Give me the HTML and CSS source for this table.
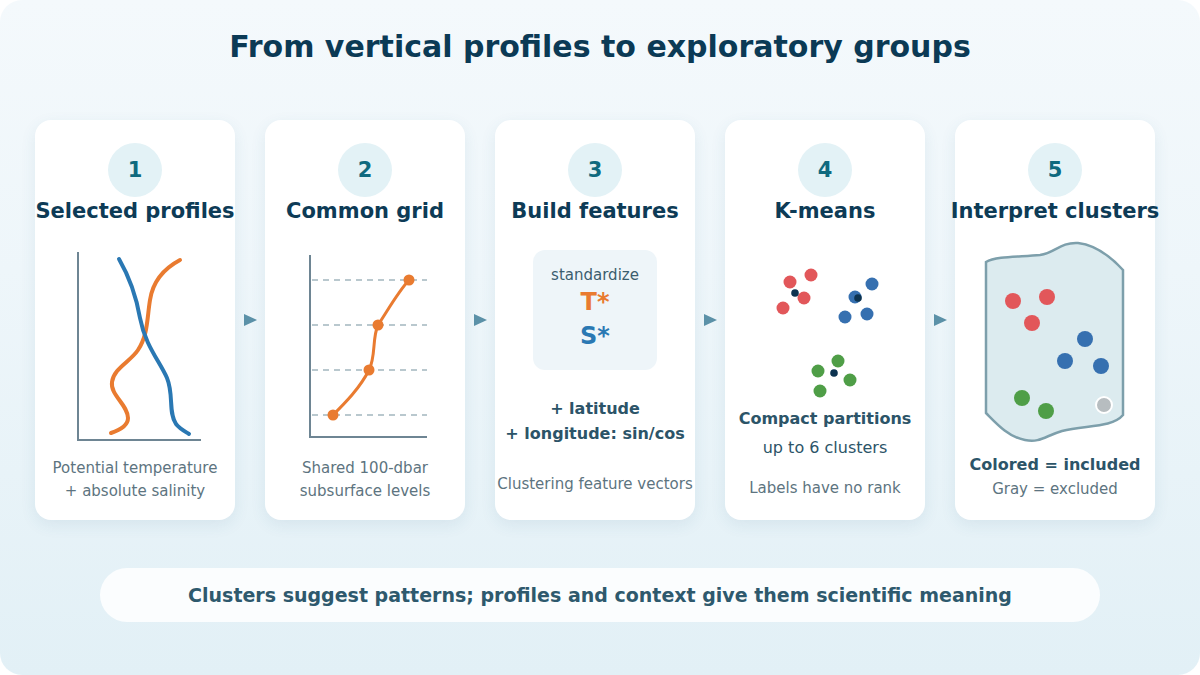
FILE: index.html
```html
<!DOCTYPE html>
<html>
<head>
<meta charset="utf-8">
<link rel="stylesheet" href="styles.css">
</head>
<body>
<div class="frame">
  <h1 class="title">From vertical profiles to exploratory groups</h1>
  <div class="row">
    <div class="card">
      <div class="badge">1</div>
      <div class="card-title">Selected profiles</div>
      <svg class="fig fig-tall" viewBox="35 223 200 222" width="200" height="222">
        <path d="M78 252 V440 H201" class="axis"/>
        <path d="M180 260 C165 268 153 280 150 300 C147 318 148 335 138 350 C130 362 114 368 112 382 C110 395 128 405 128 418 C128 427 117 431 111 433" class="curve orange"/>
        <path d="M119 259 C130 278 136 295 140 318 C145 345 160 362 167 378 C174 395 168 412 176 424 C180 429 186 432 189 434" class="curve blue"/>
      </svg>
      <div class="caption cap-a">Potential temperature<br>+ absolute salinity</div>
    </div>
    <div class="arrow"><span class="tri"></span></div>
    <div class="card">
      <div class="badge">2</div>
      <div class="card-title">Common grid</div>
      <svg class="fig fig-tall" viewBox="265 223 200 222" width="200" height="222">
        <path d="M312 280 H427 M312 325 H427 M312 370 H427 M312 415 H427" class="dash"/>
        <path d="M310 255 V437 H427" class="axis"/>
        <path d="M333 415 C345 403 360 388 369 370 C376 357 372 338 378 325 C388 310 398 292 409 280" class="line orange"/>
        <circle cx="409" cy="280" r="5.5" class="o-fill"/>
        <circle cx="378" cy="325" r="5.5" class="o-fill"/>
        <circle cx="369" cy="370" r="5.5" class="o-fill"/>
        <circle cx="333" cy="415" r="5.5" class="o-fill"/>
      </svg>
      <div class="caption cap-a">Shared 100-dbar<br>subsurface levels</div>
    </div>
    <div class="arrow"><span class="tri"></span></div>
    <div class="card">
      <div class="badge">3</div>
      <div class="card-title">Build features</div>
      <div class="std-box">
        <div class="std-label">standardize</div>
        <div class="std-var t">T*</div>
        <div class="std-var s">S*</div>
      </div>
      <div class="strong-lines">+ latitude<br>+ longitude: sin/cos</div>
      <div class="caption cap-c">Clustering feature vectors</div>
    </div>
    <div class="arrow"><span class="tri"></span></div>
    <div class="card">
      <div class="badge">4</div>
      <div class="card-title">K-means</div>
      <svg class="fig" viewBox="725 223 200 177" width="200" height="177">
        <circle cx="790" cy="282" r="6.5" class="red"/>
        <circle cx="811" cy="275" r="6.5" class="red"/>
        <circle cx="804" cy="298" r="6.5" class="red"/>
        <circle cx="783" cy="308" r="6.5" class="red"/>
        <circle cx="795" cy="293" r="3.8" class="dark"/>
        <circle cx="872" cy="284" r="6.5" class="bl"/>
        <circle cx="855" cy="297" r="6.5" class="bl"/>
        <circle cx="867" cy="314" r="6.5" class="bl"/>
        <circle cx="845" cy="317" r="6.5" class="bl"/>
        <circle cx="858" cy="298" r="3.8" class="dark"/>
        <circle cx="838" cy="361" r="6.5" class="gr"/>
        <circle cx="818" cy="371" r="6.5" class="gr"/>
        <circle cx="850" cy="380" r="6.5" class="gr"/>
        <circle cx="820" cy="391" r="6.5" class="gr"/>
        <circle cx="834" cy="373" r="3.8" class="dark"/>
      </svg>
      <div class="strong-one">Compact partitions</div>
      <div class="mid-line">up to 6 clusters</div>
      <div class="caption cap-d">Labels have no rank</div>
    </div>
    <div class="arrow"><span class="tri"></span></div>
    <div class="card">
      <div class="badge">5</div>
      <div class="card-title">Interpret clusters</div>
      <svg class="fig fig-tall" viewBox="955 223 200 222" width="200" height="222">
        <path d="M986 262 C996 256 1020 257 1040 255 C1055 253 1060 242 1078 243 C1096 245 1112 258 1123 270 L1123 415 C1112 428 1085 425 1062 431 C1045 436 1040 443 1025 440 C1008 437 995 422 986 413 Z" class="blob"/>
        <circle cx="1013" cy="301" r="8" class="red"/>
        <circle cx="1047" cy="297" r="8" class="red"/>
        <circle cx="1032" cy="323" r="8" class="red"/>
        <circle cx="1085" cy="339" r="8" class="bl"/>
        <circle cx="1065" cy="361" r="8" class="bl"/>
        <circle cx="1101" cy="366" r="8" class="bl"/>
        <circle cx="1022" cy="398" r="8" class="gr"/>
        <circle cx="1046" cy="411" r="8" class="gr"/>
        <circle cx="1104" cy="405" r="8" class="gray"/>
      </svg>
      <div class="strong-e">Colored = included</div>
      <div class="caption cap-e">Gray = excluded</div>
    </div>
  </div>
  <div class="pill">Clusters suggest patterns; profiles and context give them scientific meaning</div>
</div>
</body>
</html>
```

FILE: styles.css
```css
* { box-sizing: border-box; }
html, body { margin: 0; padding: 0; background: #ffffff; }
body { font-family: "DejaVu Sans", "Liberation Sans", sans-serif; }

.frame {
  width: 1200px;
  height: 675px;
  border-radius: 22px;
  background: linear-gradient(180deg, #f4f9fc 0%, #eef6fa 40%, #e2f0f6 100%);
  overflow: hidden;
  display: flex;
  flex-direction: column;
}

.title {
  margin: 0;
  padding-top: 30px;
  font-size: 30px;
  line-height: 34px;
  font-weight: bold;
  color: #0b3a55;
  text-align: center;
}

.row {
  display: flex;
  align-items: center;
  padding-left: 35px;
  margin-top: 56px;
}

.card {
  width: 200px;
  height: 400px;
  flex: none;
  background: #ffffff;
  border-radius: 16px;
  box-shadow: 0 5px 16px rgba(40, 95, 130, 0.09);
  display: flex;
  flex-direction: column;
  align-items: center;
  padding-top: 23px;
}

.arrow {
  width: 30px;
  flex: none;
  display: flex;
  justify-content: center;
  align-items: center;
}
.tri {
  width: 0;
  height: 0;
  border-top: 6px solid transparent;
  border-bottom: 6px solid transparent;
  border-left: 13px solid #5b91a8;
}

.badge {
  width: 54px;
  height: 54px;
  border-radius: 50%;
  background: #e3f2f6;
  color: #0f6a7f;
  font-weight: bold;
  font-size: 21px;
  display: flex;
  align-items: center;
  justify-content: center;
}

.card-title {
  margin-top: 2px;
  font-size: 21px;
  line-height: 24px;
  font-weight: bold;
  color: #0d3b56;
  white-space: nowrap;
  text-align: center;
}

.fig { display: block; flex: none; }

.axis { fill: none; stroke: #6e8593; stroke-width: 2; }
.dash { fill: none; stroke: #a3b6be; stroke-width: 1.4; stroke-dasharray: 6 5; }
.curve { fill: none; stroke-width: 4; stroke-linecap: round; }
.line { fill: none; stroke-width: 3; stroke-linecap: round; }
.curve.orange, .line.orange { stroke: #e97b30; }
.curve.blue { stroke: #2a78b3; }
.o-fill { fill: #e97b30; }

.red { fill: #e2575a; }
.bl { fill: #3670b0; }
.gr { fill: #4f9e47; }
.dark { fill: #0d3350; }
.gray { fill: #b7bdc0; stroke: #ffffff; stroke-width: 2; }
.blob { fill: #dcebef; stroke: #7d9fab; stroke-width: 2.5; }

.caption {
  font-size: 15px;
  line-height: 23px;
  color: #5d7480;
  text-align: center;
  white-space: nowrap;
}
.cap-a { margin-top: 11.5px; }

.std-box {
  margin-top: 27px;
  width: 124px;
  height: 120px;
  border-radius: 12px;
  background: #eef5f9;
  padding-top: 15px;
  text-align: center;
}
.std-label {
  font-size: 15px;
  line-height: 20px;
  color: #3b5d6e;
}
.std-var {
  font-size: 24px;
  line-height: 34px;
  font-weight: bold;
}
.std-var.t { color: #e97b30; }
.std-var.s { color: #2a78b3; }

.strong-lines {
  margin-top: 25.5px;
  font-size: 16px;
  line-height: 25px;
  font-weight: bold;
  color: #2c5468;
  text-align: center;
  white-space: nowrap;
}
.cap-c { margin-top: 27px; }

.strong-one {
  margin-top: 8px;
  font-size: 16px;
  line-height: 22px;
  font-weight: bold;
  color: #2c5468;
}
.mid-line {
  margin-top: 7px;
  font-size: 16px;
  line-height: 22px;
  color: #2c5468;
}
.cap-d { margin-top: 17.5px; }

.strong-e {
  margin-top: 6.5px;
  font-size: 16px;
  line-height: 25px;
  font-weight: bold;
  color: #2c5468;
}
.cap-e { line-height: 25px; }

.pill {
  margin: 48px auto 0;
  width: 1000px;
  height: 54px;
  border-radius: 27px;
  background: #fbfdfe;
  display: flex;
  align-items: center;
  justify-content: center;
  font-size: 19px;
  font-weight: bold;
  color: #2e596d;
}
```
